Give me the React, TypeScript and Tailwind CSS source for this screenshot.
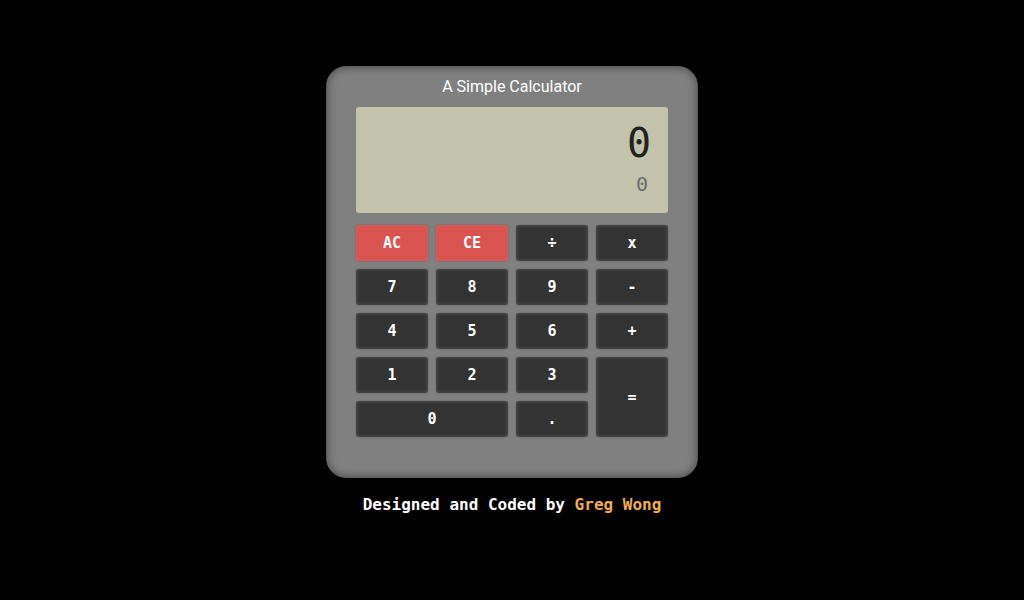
import React from "react";

const mono = { fontFamily: '"DejaVu Sans Mono", "Liberation Mono", monospace' };

function Btn({ label, red, className = "" }: { label: string; red?: boolean; className?: string }) {
  return (
    <button
      className={
        "flex items-center justify-center rounded-[3px] text-[15px] font-bold text-white " +
        (red
          ? "bg-[#d9534f] shadow-[inset_0_0_3px_rgba(255,255,255,0.15),0_0_2px_rgba(0,0,0,0.3)] "
          : "bg-[#333333] shadow-[inset_0_0_4px_rgba(120,120,120,0.6),0_0_2px_rgba(0,0,0,0.3)] ") +
        className
      }
      style={mono}
    >
      {label}
    </button>
  );
}

export default function App() {
  return (
    <div className="min-h-[600px] w-full bg-black flex flex-col items-center pt-[66px]">
      <div className="w-[372px] h-[412px] rounded-[20px] bg-[#808080] border border-[#5a5a5a] shadow-[inset_0_0_8px_rgba(0,0,0,0.45)] flex flex-col px-[29px]">
        <div
          className="h-[40px] flex items-center justify-center text-white text-[16px]"
          style={{ fontFamily: 'Roboto, "Noto Sans", sans-serif' }}
        >
          A Simple Calculator
        </div>
        <div className="h-[106px] rounded-[3px] bg-[#c2c3aa] flex flex-col items-end pr-[17px] pt-[12px]">
          <div className="text-[40px] leading-[48px] text-[#222] font-light" style={mono}>
            0
          </div>
          <div className="text-[20px] leading-[24px] text-[#6b6e66] pr-[3px] mt-[5px]" style={mono}>
            0
          </div>
        </div>
        <div className="mt-[12px] grid grid-cols-4 grid-rows-[36px_36px_36px_36px_36px] gap-2">
          <Btn label="AC" red />
          <Btn label="CE" red />
          <Btn label="÷" />
          <Btn label="x" />
          <Btn label="7" />
          <Btn label="8" />
          <Btn label="9" />
          <Btn label="-" />
          <Btn label="4" />
          <Btn label="5" />
          <Btn label="6" />
          <Btn label="+" />
          <Btn label="1" />
          <Btn label="2" />
          <Btn label="3" />
          <Btn label="=" className="row-span-2" />
          <Btn label="0" className="col-span-2" />
          <Btn label="." />
        </div>
      </div>
      <div className="mt-[15px] text-[16px] font-bold text-white" style={mono}>
        Designed and Coded by <span className="text-[#f0ad4e]">Greg Wong</span>
      </div>
    </div>
  );
}
